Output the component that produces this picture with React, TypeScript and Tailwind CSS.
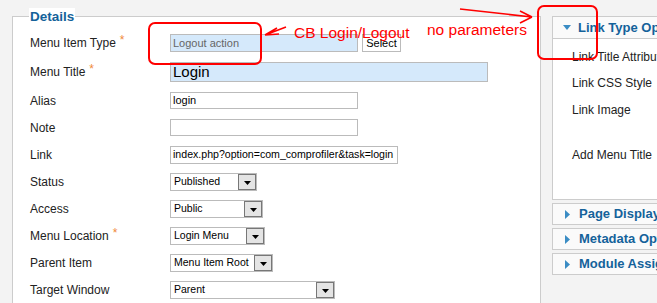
import React from 'react';

const Star = () => <span className="ml-[4px] text-[12px] leading-none text-[#f08a3a] relative -top-[3px]">*</span>;

const Arrow = () => (
    <svg width="7" height="4" viewBox="0 0 7 4">
        <path d="M0 0 H7 L3.5 4 Z" fill="#000" />
    </svg>
);

const Select = ({ value, className }: { value: string; className: string }) => (
    <div className={`flex h-[18px] items-stretch border border-[#bbb] bg-white ${className}`}>
        <span className="flex flex-1 items-center overflow-hidden pl-[3px] text-[10.5px] leading-none text-black whitespace-nowrap">{value}</span>
        <span className="flex w-[18px] shrink-0 items-end justify-center border border-[#777] bg-[#e4e4e4] pb-[4px]">
            <Arrow />
        </span>
    </div>
);

const Row = ({ label, required, h, children }: { label: string; required?: boolean; h: string; children?: React.ReactNode }) => (
    <div className={`flex items-center ${h}`}>
        <div className="flex w-[140px] items-center text-[12px] text-[#222]">
            {label}
            {required && <Star />}
        </div>
        {children}
    </div>
);

const TriDown = () => (
    <svg width="8" height="5" viewBox="0 0 8 5" className="mr-[7px] shrink-0">
        <path d="M0 0 H8 L4 5 Z" fill="#3a8cc4" />
    </svg>
);

const TriRight = () => (
    <svg width="5" height="9" viewBox="0 0 5 9" className="mr-[9px] shrink-0">
        <path d="M0 0 L5 4.5 L0 9 Z" fill="#3a8cc4" />
    </svg>
);

const panels = ['Page Display Options', 'Metadata Options', 'Module Assignment for this Menu Item'];

export default function App() {
    return (
        <div className="relative h-[303px] w-[657px] overflow-hidden bg-[#f3f3f3] font-['Liberation_Sans',Arial,sans-serif]">
            <div className="flex pl-[12px] pt-[16px]">
                <div className="relative h-[300px] w-[529px] shrink-0 border border-b-0 border-[#ccc] bg-white pl-[17px] pt-[12px]">
                    <span className="absolute -top-[9px] left-[16px] bg-white px-[1px] text-[13.5px] font-bold leading-[17px] text-[#14629a]">Details</span>

                    <Row label="Menu Item Type" required h="h-[28px]">
                        <div className="flex h-[18px] w-[188px] items-center border border-[#bbb] bg-[#d5e9fb] pl-[2px] text-[11px] text-[#666]">Logout action</div>
                        <div className="ml-[4px] flex h-[18px] w-[39px] items-center justify-center border border-[#bbb] bg-white text-[11px] text-black">Select</div>
                    </Row>
                    <Row label="Menu Title" required h="h-[30px]">
                        <div className="flex h-[20px] w-[318px] items-center border border-[#bbb] bg-[#d5e9fb] pl-[2px] text-[15px] text-black">Login</div>
                    </Row>
                    <Row label="Alias" h="h-[27px]">
                        <div className="flex h-[17px] w-[188px] items-center border border-[#bbb] bg-white pl-[2px] text-[11px] text-black">login</div>
                    </Row>
                    <Row label="Note" h="h-[27px]">
                        <div className="h-[17px] w-[188px] border border-[#bbb] bg-white" />
                    </Row>
                    <Row label="Link" h="h-[27px]">
                        <div className="flex h-[18px] w-[228px] items-center overflow-hidden whitespace-nowrap border border-[#bbb] bg-white pl-[2px] text-[10.6px] text-black">index.php?option=com_comprofiler&amp;task=login</div>
                    </Row>
                    <Row label="Status" h="h-[27px]">
                        <Select value="Published" className="w-[87px]" />
                    </Row>
                    <Row label="Access" h="h-[27px]">
                        <Select value="Public" className="w-[93px]" />
                    </Row>
                    <Row label="Menu Location" required h="h-[27px]">
                        <Select value="Login Menu" className="w-[95px]" />
                    </Row>
                    <Row label="Parent Item" h="h-[27px]">
                        <Select value="Menu Item Root" className="w-[103px]" />
                    </Row>
                    <Row label="Target Window" h="h-[27px]">
                        <Select value="Parent" className="w-[165px]" />
                    </Row>
                </div>

                <div className="flex w-[320px] shrink-0 flex-col pl-[11px]">
                    <div className="border border-[#ccc] bg-white">
                        <div className="flex h-[22px] items-center border-b border-[#ccc] bg-[#fafafa] pl-[10px] text-[13px] font-bold whitespace-nowrap text-[#14629a]">
                            <TriDown />
                            Link Type Options
                        </div>
                        <div className="flex h-[160px] flex-col pl-[19px] text-[12px] text-[#222]">
                            <div className="flex h-[36px] items-center">Link Title Attribute</div>
                            <div className="flex h-[16px] items-center">Link CSS Style</div>
                            <div className="flex h-[38px] items-center">Link Image</div>
                            <div className="flex h-[52px] items-center">Add Menu Title</div>
                        </div>
                    </div>
                    {panels.map(p => (
                        <div key={p} className="mt-[3px] flex h-[22px] items-center border border-[#ccc] bg-[#fafafa] pl-[12px] text-[13px] font-bold whitespace-nowrap text-[#14629a]">
                            <TriRight />
                            {p}
                        </div>
                    ))}
                </div>
            </div>

            {/* annotations */}
            <svg className="pointer-events-none absolute inset-0" width="657" height="303">
                <rect x="149" y="23" width="112" height="41" rx="6" fill="none" stroke="#f00" strokeWidth="2" />
                <rect x="538" y="6" width="59" height="53" rx="6" fill="none" stroke="#f00" strokeWidth="2" />
                <path d="M286 27 L265 35 M265 35 L277 28 M265 35 L279 34" fill="none" stroke="#f00" strokeWidth="1.6" />
                <path d="M460 9 L532 17 M532 17 L520 11 M532 17 L520 23" fill="none" stroke="#f00" strokeWidth="1.6" />
            </svg>
            <span className="pointer-events-none absolute left-[294px] top-[25px] text-[15.5px] leading-none whitespace-nowrap text-[#f00]">CB Login/Logout</span>
            <span className="pointer-events-none absolute left-[427px] top-[22px] text-[15.5px] leading-none whitespace-nowrap text-[#f00]">no parameters</span>
        </div>
    );
}
